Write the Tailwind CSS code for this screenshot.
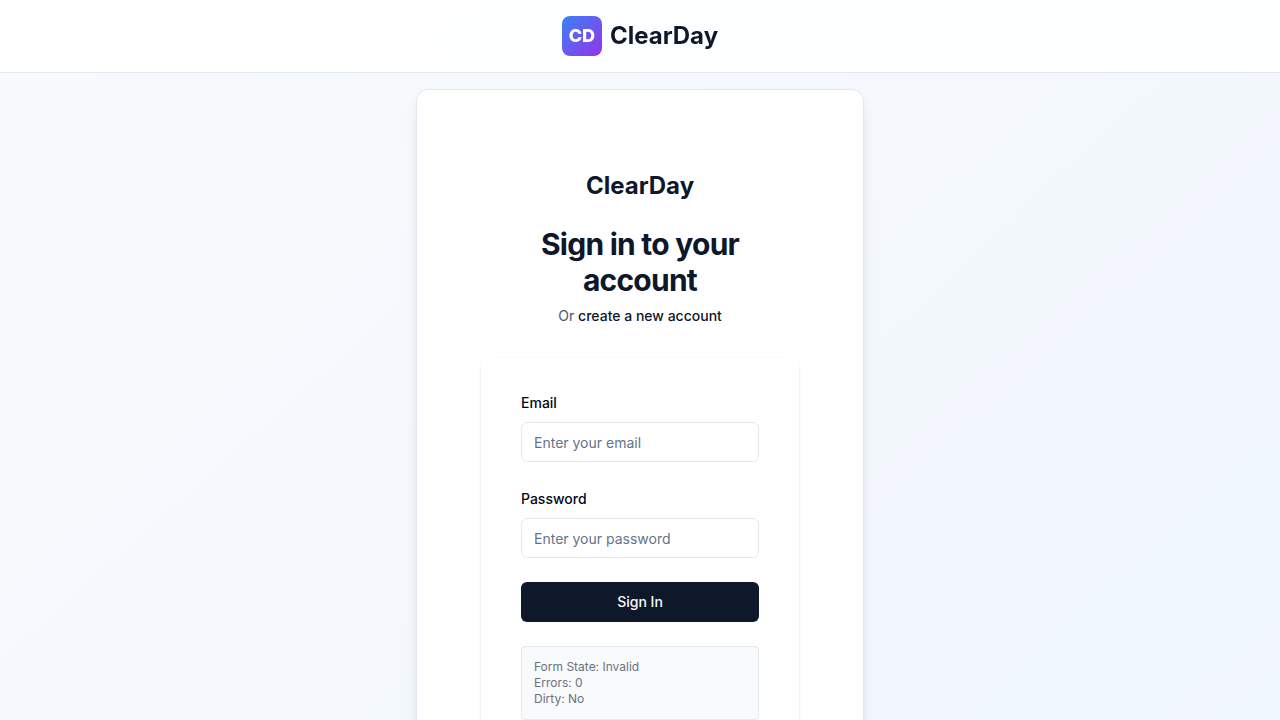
<!DOCTYPE html>
<html lang="en">
<head>
<meta charset="utf-8">
<meta name="viewport" content="width=device-width, initial-scale=1">
<title>ClearDay</title>
<script src="https://cdn.jsdelivr.net/npm/@tailwindcss/browser@4"></script>
</head>
<body class="bg-white font-['Inter',sans-serif] text-[#020817]">
<div class="flex min-h-screen flex-col bg-linear-to-br/srgb from-[#f8fafc] to-[#eff6ff]">
  <header class="border-b border-[#e2e8f0] bg-white/80 px-4 py-4 backdrop-blur-sm">
    <a href="#" class="flex items-center justify-center gap-2">
      <span class="flex size-10 items-center justify-center rounded-lg bg-linear-to-br/srgb from-[#3b82f6] to-[#9333ea] text-lg font-extrabold text-white">CD</span>
      <span class="text-2xl font-bold text-[#0f172a]">ClearDay</span>
    </a>
  </header>
  <main class="flex grow justify-center px-4 pt-4 pb-20">
    <div class="w-full max-w-md rounded-xl border border-[#e2e8f0] bg-white p-8 shadow-lg">
      <div class="px-8 pt-12 pb-72">
        <div class="text-center">
          <p class="text-2xl font-bold text-[#0f172a]">ClearDay</p>
          <h1 class="mt-6 text-3xl font-bold tracking-tight text-[#0f172a]">Sign in to your account</h1>
          <p class="mt-2 text-sm text-[#475569]">Or <a href="#" class="font-medium text-[#0f172a]">create a new account</a></p>
        </div>
        <form class="mt-8 flex flex-col gap-6 rounded-lg bg-white px-10 py-8 shadow-sm">
          <div class="space-y-2">
            <div><label for="email" class="text-sm font-medium">Email</label></div>
            <input id="email" type="email" placeholder="Enter your email" class="block h-10 w-full rounded-md border border-[#e2e8f0] bg-white px-3 py-2 text-sm placeholder:text-[#64748b]">
          </div>
          <div class="space-y-2">
            <div><label for="password" class="text-sm font-medium">Password</label></div>
            <input id="password" type="password" placeholder="Enter your password" class="block h-10 w-full rounded-md border border-[#e2e8f0] bg-white px-3 py-2 text-sm placeholder:text-[#64748b]">
          </div>
          <button type="submit" class="h-10 w-full rounded-md bg-[#0f172a] px-4 text-sm font-medium text-[#f8fafc]">Sign In</button>
          <div class="rounded border border-[#e2e8f0] bg-[#f8fafc] p-3 text-xs text-[#6b7280]">
            <p>Form State: Invalid</p>
            <p>Errors: 0</p>
            <p>Dirty: No</p>
          </div>
        </form>
      </div>
    </div>
  </main>
</div>
</body>
</html>
